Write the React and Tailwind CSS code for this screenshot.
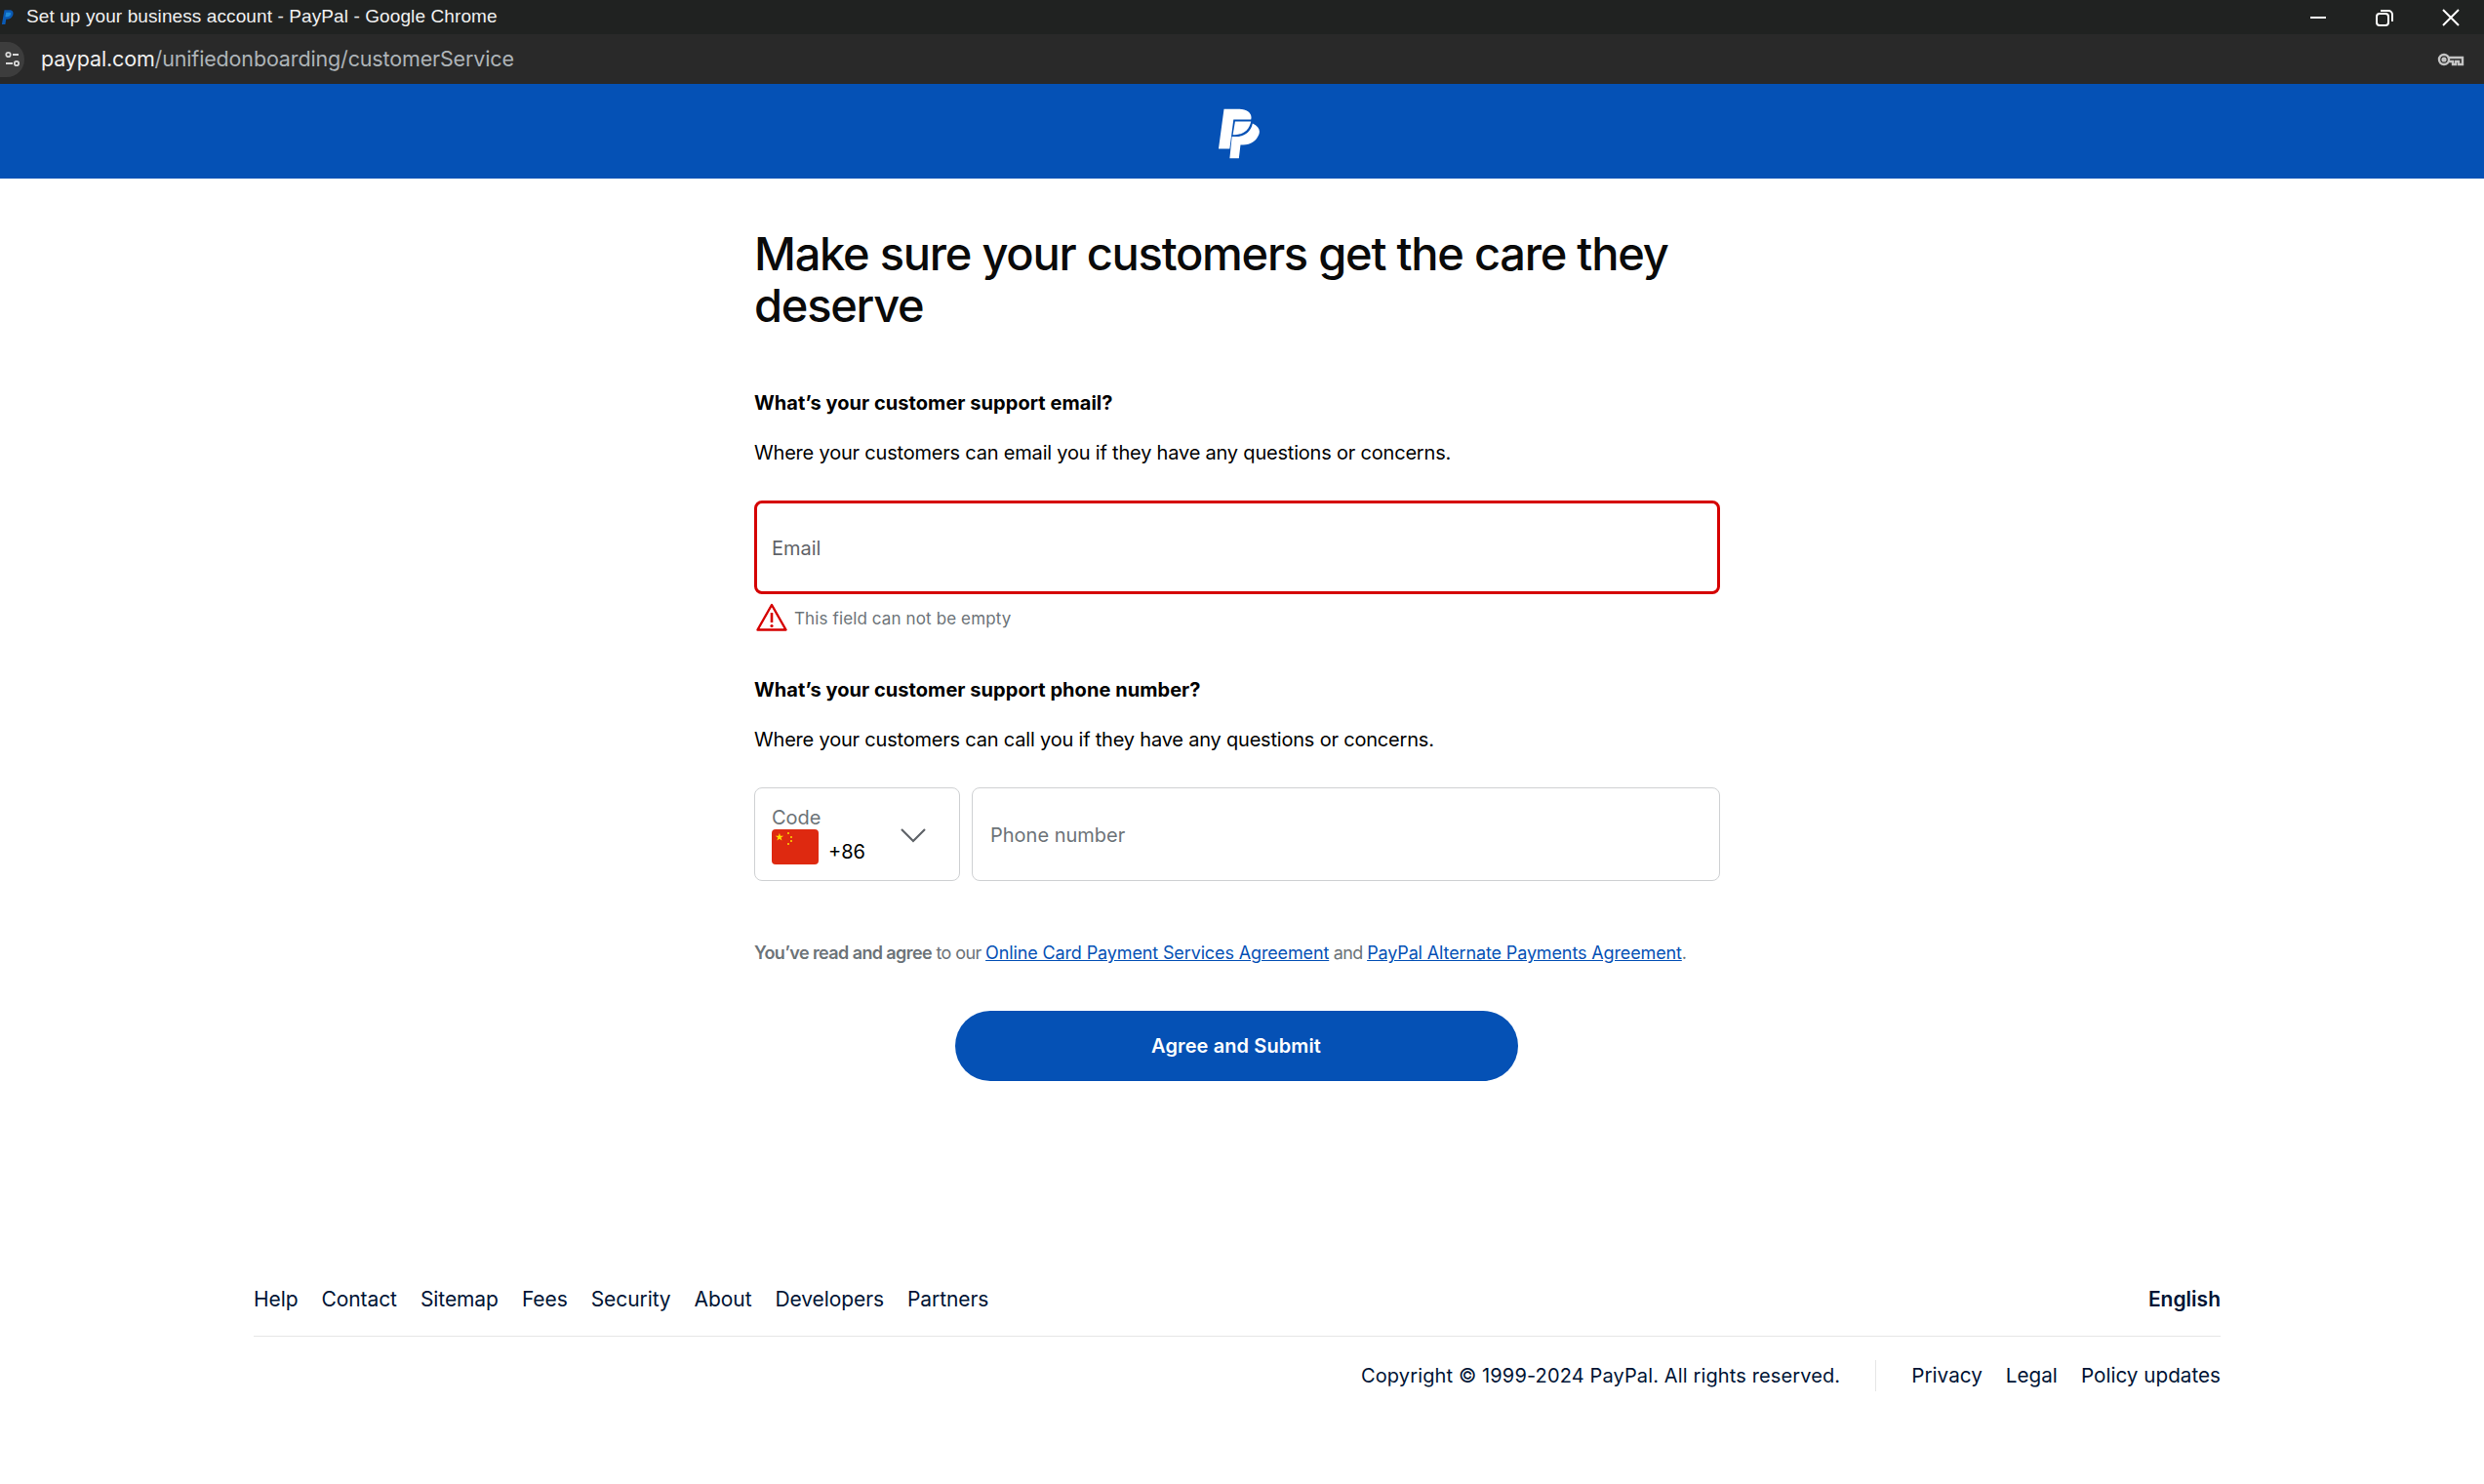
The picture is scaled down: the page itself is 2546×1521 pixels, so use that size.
function Logo({className}){return(<svg viewBox="140 60 135 165" className={className}>
<path d="M160 65H208C235 65 250 80 245 98H190L178 190H143Z" fill="#fff"/>
<path d="M195 104H245C240 130 220 146 195 146H188Z" fill="#fff"/>
<path d="M250 110C268 118 275 130 270 145C262 165 245 178 220 178H212L207 220H178L185 152H197C225 152 245 135 250 110Z" fill="#fff"/>
</svg>)}
export default function App(){
return(<div className="min-h-[1521px] bg-white font-['Inter',sans-serif] text-black">
<div className="h-[35px] bg-[#202221] flex items-center text-[#f1f1f1] font-['Liberation_Sans',sans-serif]">
<svg viewBox="0 0 16 20" className="w-[14px] h-[18px] ml-[1px]"><path d="M4 1h6c4 0 5 3 4 6s-4 5-7 5H6l-1 6H1z" fill="#0a5ab5"/><path d="M6 4h4c2 0 2 2 1 3s-2 2-4 2H5z" fill="#1f8ad8"/></svg>
<span className="ml-[12px] tracking-[0.1px] text-[19px]">Set up your business account - PayPal - Google Chrome</span>
<div className="ml-auto flex items-center gap-[46px] mr-[23px]">
<svg width="22" height="22" viewBox="0 0 22 22"><path d="M3 11h16" stroke="#fff" strokeWidth="2"/></svg>
<svg width="22" height="22" viewBox="0 0 22 22" fill="none" stroke="#fff" strokeWidth="2"><rect x="3" y="7" width="12" height="12" rx="3"/><path d="M7 4h8a4 4 0 0 1 4 4v7"/></svg>
<svg width="22" height="22" viewBox="0 0 22 22" stroke="#fff" strokeWidth="2"><path d="M3 3l16 16M19 3L3 19"/></svg>
</div>
</div>
<div className="h-[51px] bg-[#292929] flex items-center">
<div className="w-[25px] h-[36px] rounded-r-full bg-[#3d3d3d] flex items-center justify-center mr-[17px]">
<svg width="16" height="18" viewBox="0 0 16 18" fill="none" stroke="#d8d8d8" strokeWidth="1.8"><circle cx="3.5" cy="4" r="2.2"/><path d="M8 4h6M1 13h7"/><circle cx="12" cy="13" r="2.2"/></svg>
</div>
<span className="text-[21.5px] tracking-[-0.15px] text-[#aeb4b8]"><span className="text-[#f0f0f0]">paypal.com</span>/unifiedonboarding/customerService</span>
<svg className="ml-auto mr-[20px]" width="28" height="16" viewBox="0 0 28 16" fill="none" stroke="#c4c4c4" strokeWidth="2.4"><circle cx="7" cy="8" r="5"/><circle cx="7" cy="8" r="1.4"/><path d="M12 6h14v7h-4v-3h-3v3h-3V10h-4"/></svg>
</div>
<div className="h-[97px] bg-[#0551b5] flex items-center justify-center"><Logo className="w-[44px] h-[54px] mr-[7px] mt-[5px]"/></div>
<main className="w-[990px] ml-[773px] pt-[50px]">
<h1 className="text-[47px] leading-[53px] font-medium tracking-[-1.25px] text-[#0a0a0a]">Make sure your customers get the care they deserve</h1>
<h2 className="mt-[60px] text-[20px] leading-[28px] font-bold tracking-[0.05px]">What’s your customer support email?</h2>
<p className="mt-[23px] text-[20px] leading-[28px] tracking-[-0.2px]">Where your customers can email you if they have any questions or concerns.</p>
<div className="mt-[35px] h-[96px] border-[3px] border-[#d50000] rounded-[8px] flex items-center pl-[15px] pt-[2px] text-[20px] text-[#5f6368]">Email</div>
<div className="mt-[10px] h-[32px] flex items-center text-[17px] tracking-[0.12px] text-[#6c7378]">
<svg className="ml-[2px] mr-[7px] mb-[4px]" width="32" height="30" viewBox="0 0 32 30" fill="none"><path d="M16 2L30.5 27.5H1.5z" stroke="#d50000" strokeWidth="2.4" strokeLinejoin="round"/><path d="M16 10v10" stroke="#d50000" strokeWidth="2.6"/><circle cx="16" cy="23.5" r="1.6" fill="#d50000"/></svg>
This field can not be empty</div>
<h2 className="mt-[42px] text-[20px] leading-[28px] font-bold tracking-[0.05px]">What’s your customer support phone number?</h2>
<p className="mt-[23px] text-[20px] leading-[28px] tracking-[-0.2px]">Where your customers can call you if they have any questions or concerns.</p>
<div className="mt-[35px] flex gap-[12px] h-[96px]">
<div className="w-[211px] border border-[#cfd1d3] rounded-[8px] pl-[17px] pr-[34px] flex items-center justify-between">
<div className="pt-[1px]"><div className="text-[20px] leading-[24px] text-[#6c7378]">Code</div>
<div className="flex items-end gap-[10px]"><div className="w-[48px] h-[36px] rounded-[4px] bg-[#de2910] relative">
<svg className="absolute left-[3px] top-[1px]" width="22" height="16" viewBox="0 0 22 16" fill="#ffde00"><path d="M7 2l1.4 4.2H13L9.3 8.8l1.4 4.2L7 10.4 3.3 13l1.4-4.2L1 6.2h4.6z" transform="scale(.7) translate(0 2)"/><circle cx="14" cy="3" r="1"/><circle cx="17" cy="7" r="1"/><circle cx="17" cy="11" r="1"/><circle cx="14" cy="14" r="1"/></svg>
</div><span className="text-[20px] leading-[26px]">+86</span></div></div>
<svg className="mt-[1px]" width="26" height="16" viewBox="0 0 26 16" fill="none" stroke="#5f6368" strokeWidth="2.2"><path d="M1 2l12 12L25 2"/></svg>
</div>
<div className="flex-1 border border-[#cfd1d3] rounded-[8px] pl-[18px] pt-[1px] flex items-center text-[20px] text-[#6c7378]">Phone number</div>
</div>
<p className="mt-[62px] text-[18px] leading-[24px] text-[#6c7378] tracking-[-0.6px]"><span className="font-semibold">You’ve read and agree</span> to our <a className="text-[#0551b5] underline tracking-[-0.13px]">Online Card Payment Services Agreement</a> and <a className="text-[#0551b5] underline tracking-[-0.13px]">PayPal Alternate Payments Agreement</a>.</p>
<div className="mt-[47px] flex justify-center"><button className="w-[577px] h-[72px] mr-[2px] rounded-full bg-[#0551b5] text-white text-[20px] font-semibold tracking-[0.1px]">Agree and Submit</button></div>
</main>
<footer className="mt-[200px] ml-[260px] w-[2016px] text-[#001435]">
<div className="flex justify-between h-[62px] pb-[13px] items-center border-b border-[#e6e6e6] text-[21px]">
<div className="flex gap-[24px] tracking-[-0.08px]"><a>Help</a><a>Contact</a><a>Sitemap</a><a>Fees</a><a>Security</a><a>About</a><a>Developers</a><a>Partners</a></div>
<span className="font-semibold">English</span></div>
<div className="mt-[24px] flex justify-end items-center text-[20px]">
<span className="tracking-[0.13px]">Copyright © 1999-2024 PayPal. All rights reserved.</span>
<div className="w-px h-[32px] bg-[#e6e6e6] mx-[36px]"/>
<div className="flex gap-[24px] text-[20.7px]"><a>Privacy</a><a>Legal</a><a>Policy updates</a></div>
</div>
</footer>
</div>)}
